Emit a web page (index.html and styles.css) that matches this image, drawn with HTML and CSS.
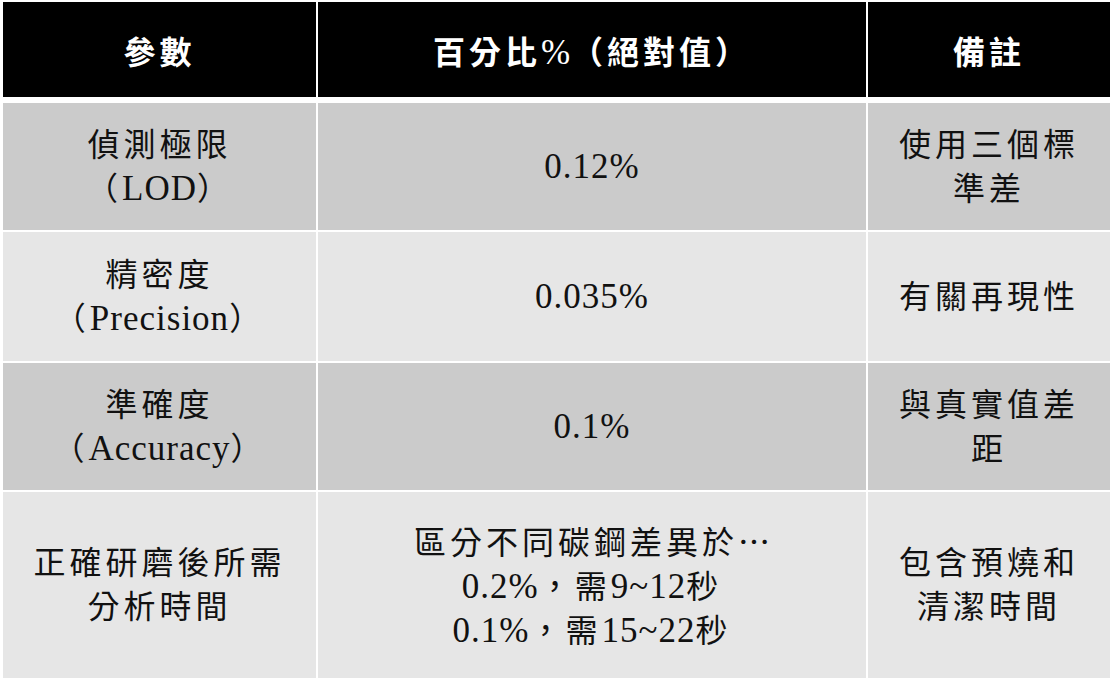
FILE: index.html
```html
<!DOCTYPE html>
<html lang="zh-Hant">
<head>
<meta charset="utf-8">
<title>參數表</title>
<link rel="stylesheet" href="styles.css">
</head>
<body>
<div class="table">
  <div class="cell head"><p>參數</p></div>
  <div class="cell head"><p>百分比<span class="lat">%</span>（絕對值）</p></div>
  <div class="cell head"><p>備註</p></div>

  <div class="cell dark"><p>偵測極限<br>（<span class="lat">LOD</span>）</p></div>
  <div class="cell dark"><p><span class="lat">0.12%</span></p></div>
  <div class="cell dark"><p>使用三個標<br>準差</p></div>

  <div class="cell light"><p>精密度<br>（<span class="lat">Precision</span>）</p></div>
  <div class="cell light"><p><span class="lat">0.035%</span></p></div>
  <div class="cell light"><p>有關再現性</p></div>

  <div class="cell dark"><p>準確度<br>（<span class="lat">Accuracy</span>）</p></div>
  <div class="cell dark"><p><span class="lat">0.1%</span></p></div>
  <div class="cell dark"><p>與真實值差<br>距</p></div>

  <div class="cell light"><p>正確研磨後所需<br>分析時間</p></div>
  <div class="cell light"><p>區分不同碳鋼差異於<span class="ell">…</span><br><span class="lat">0.2%</span>，需<span class="lat">9~12</span>秒<br><span class="lat">0.1%</span>，需<span class="lat">15~22</span>秒</p></div>
  <div class="cell light"><p>包含預燒和<br>清潔時間</p></div>
</div>
</body>
</html>
```
FILE: styles.css
```css
html, body {
  margin: 0;
  padding: 0;
  background: #ffffff;
}

body {
  padding: 2px 0 0 3px;
  font-family: "Liberation Serif", "Noto Sans CJK TC", serif;
}

.table {
  display: grid;
  grid-template-columns: 313px 548px 242px;
  grid-template-rows: 99px 127px 129px 127px 186px;
  gap: 2px;
  width: 1107px;
}

.cell {
  display: flex;
  align-items: center;
  justify-content: center;
  text-align: center;
  font-size: 32px;
  line-height: 44px;
  letter-spacing: 4px;
  color: #111111;
}

.cell p {
  margin: 0;
}

.lat {
  font-family: "Liberation Serif", serif;
  font-size: 35px;
  letter-spacing: 1px;
}

.ell {
  font-family: "Noto Sans CJK TC", sans-serif;
  letter-spacing: 0;
}

.head {
  background: #000000;
  color: #ffffff;
  font-weight: bold;
  margin-bottom: 4px;
  padding-top: 6px;
}

.head .lat {
  font-weight: normal;
}

.dark {
  background: #cbcbcb;
}

.light {
  background: #e6e6e6;
}
```
